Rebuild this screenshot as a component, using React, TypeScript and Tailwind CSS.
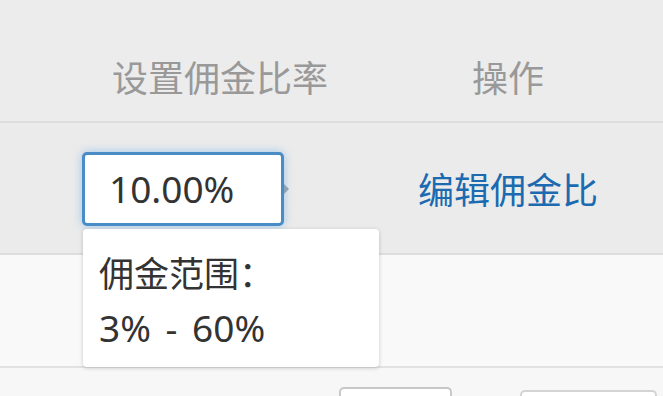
import React from 'react';

const font = { fontFamily: '"Noto Sans", "Noto Sans CJK SC", sans-serif' };

const App: React.FC = () => {
  return (
    <div className="w-[663px] h-[396px] overflow-hidden bg-[#f7f7f7]" style={font}>
      {/* Header */}
      <div className="h-[121px] flex items-end pb-[24px] bg-[#ececec] text-[36px] leading-[36px] text-[#999]">
        <div className="w-[472px] pl-[112px]">设置佣金比率</div>
        <div>操作</div>
      </div>
      <div className="h-[2px] bg-[#dedede]" />

      {/* Editing row */}
      <div className="relative h-[130px] flex items-start bg-[#ebebeb]">
        <div className="w-[418px] pl-[82px] pt-[29px] flex items-center">
          <div className="w-[202px] h-[74px] rounded-[5px] border-[3px] border-[#4a8cc6] bg-white shadow-[0_0_10px_rgba(102,175,233,0.6)] flex items-center pl-[24px] text-[37px] text-[#333]">
            10.00%
          </div>
          <div className="w-0 h-0 border-y-[5px] border-y-transparent border-l-[5px] border-l-[#8aa3b8]" />
        </div>
        <div className="pt-[50px] text-[36px] leading-[36px] text-[#1c6ab0]">编辑佣金比</div>

        {/* Tooltip */}
        <div className="absolute left-[83px] top-[106px] w-[296px] h-[138px] z-10 rounded-[4px] bg-white shadow-[0_1px_4px_rgba(0,0,0,0.2)] pl-[16px] pt-[18px] text-[35px] leading-[54px] text-[#333]">
          <div>佣金范围：</div>
          <div className="text-[37px] [word-spacing:5px]">3% - 60%</div>
        </div>
      </div>
      <div className="h-[2px] bg-[#dedede]" />

      {/* Next row */}
      <div className="h-[111px] bg-[#f9f9f9]" />
      <div className="h-[2px] bg-[#e2e2e2]" />

      {/* Bottom row */}
      <div className="h-[28px] flex items-start pt-[19px]">
        <div className="ml-[339px] w-[113px] h-[20px] rounded-t-[5px] border-[2px] border-b-0 border-[#c8c8c8] bg-white" />
        <div className="ml-[68px] mt-[3px] w-[137px] h-[20px] rounded-t-[5px] border-[2px] border-b-0 border-[#d4d4d4] bg-white" />
      </div>
    </div>
  );
};

export default App;
